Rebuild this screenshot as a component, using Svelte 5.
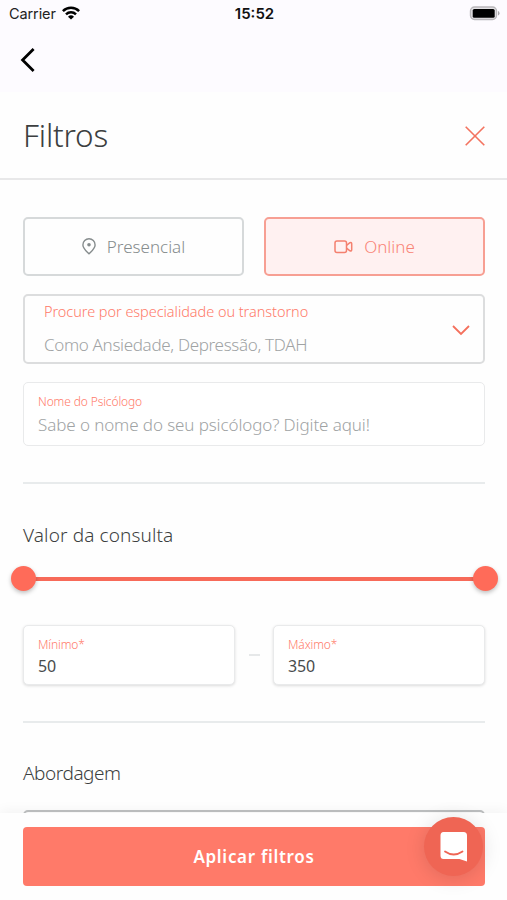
<script lang="ts">
	// Tipos de atendimento
	type Mode = 'presencial' | 'online';

	let mode: Mode = $state('online');
	let specialty = $state('');
	let name = $state('');

	// Limites do valor da consulta
	const limits = { min: 50, max: 350 };
	let min = $state(50);
	let max = $state(350);

	// Posição dos marcadores em porcentagem
	let start = $derived(((min - limits.min) / (limits.max - limits.min)) * 100);
	let end = $derived(((max - limits.min) / (limits.max - limits.min)) * 100);
</script>

<div class="screen">
	<header class="top">
		<div class="status">
			<div class="carrier">
				<span>Carrier</span>
				<svg width="18" height="14" viewBox="0 0 18 14" fill="none" stroke="#000" stroke-width="2.5">
					<path d="M.9 5.1a11.5 11.5 0 0 1 16.2 0" />
					<path d="M4 8.3a7.2 7.2 0 0 1 10 0" />
					<path d="M9 13.5 6 10.7a4.4 4.4 0 0 1 6 0z" fill="#000" stroke="none" />
				</svg>
			</div>
			<span class="time">15:52</span>
			<svg class="battery" width="31" height="15" viewBox="0 0 31 15">
				<rect x="1.5" y="1" width="26" height="12.5" rx="4" fill="#e4e2e5" stroke="#b9b7ba" stroke-width="1.4" />
				<rect x="3.7" y="3" width="22" height="8.8" rx="1.6" fill="#000" />
				<path d="M29 5v4.5q1.5-.6 1.5-2.25T29 5z" fill="#a9a7aa" />
			</svg>
		</div>
		<button class="back" aria-label="Voltar">
			<svg width="16" height="26" viewBox="0 0 16 26" fill="none" stroke="#000" stroke-width="2.8">
				<path d="M13.6 2 2.6 13l11 11" />
			</svg>
		</button>
	</header>

	<div class="title">
		<h1>Filtros</h1>
		<button aria-label="Fechar">
			<svg width="20" height="20" viewBox="0 0 20 20" fill="none" stroke="#f3735f" stroke-width="1.6">
				<path d="M.7.7l18.6 18.6M19.3.7.7 19.3" />
			</svg>
		</button>
	</div>

	<main>
		<div class="modes">
			<button class="mode" class:active={mode === 'presencial'} onclick={() => (mode = 'presencial')}>
				<svg width="14" height="17" viewBox="0 0 14 17" fill="none" stroke="currentColor" stroke-width="1.4">
					<path d="M7 15.8C4.5 13.2.9 10.4.9 6.9a6.1 6.1 0 0 1 12.2 0c0 3.5-3.6 6.3-6.1 8.9z" />
					<circle cx="7" cy="6.8" r="1.8" fill="currentColor" stroke="none" />
				</svg>
				<span>Presencial</span>
			</button>
			<button class="mode" class:active={mode === 'online'} onclick={() => (mode = 'online')}>
				<svg width="19" height="14" viewBox="0 0 19 14" fill="none" stroke="#f4806f" stroke-width="1.5">
					<rect x="1" y="1" width="11.5" height="11.5" rx="2" />
					<path d="M12.5 5.3 16 2.7q1.7-.6 1.7 1v6.1q0 1.6-1.7 1l-3.5-2.6" stroke-linejoin="round" />
				</svg>
				<span>Online</span>
			</button>
		</div>

		<div class="select">
			<div class="select-text">
				<span class="label">Procure por especialidade ou transtorno</span>
				<span class="value">{specialty || 'Como Ansiedade, Depressão, TDAH'}</span>
			</div>
			<svg width="18" height="11" viewBox="0 0 18 11" fill="none" stroke="#f4705d" stroke-width="1.8">
				<path d="M1 1l8 8 8-8" />
			</svg>
		</div>

		<label class="field name">
			<span>Nome do Psicólogo</span>
			<input bind:value={name} placeholder="Sabe o nome do seu psicólogo? Digite aqui!" />
		</label>

		<hr />

		<h2 class="price-title">Valor da consulta</h2>
		<div class="slider">
			<div class="range" style="left: {start}%; width: {end - start}%"></div>
			<i class="thumb" style="left: {start}%"></i>
			<i class="thumb" style="left: {end}%"></i>
		</div>

		<div class="prices">
			<label class="field price">
				<span>Mínimo*</span>
				<input bind:value={min} />
			</label>
			<span class="dash"></span>
			<label class="field price">
				<span>Máximo*</span>
				<input bind:value={max} />
			</label>
		</div>

		<hr />

		<h2 class="approach-title">Abordagem</h2>
		<div class="select approach"></div>
	</main>

	<footer>
		<button class="apply">Aplicar filtros</button>
		<button class="chat" aria-label="Abrir chat">
			<svg width="28" height="30" viewBox="0 0 28 30">
				<path d="M3.5 0h20Q27 0 27 3.5V29.5L19.5 27h-16Q.5 27 .5 23.5v-20Q.5 0 3.5 0z" fill="#fff" />
				<path d="M5 19.5q8.7 6 17.5 0" fill="none" stroke="#ef6554" stroke-width="1.8" stroke-linecap="round" />
			</svg>
		</button>
	</footer>
</div>

<style>
	:global(body) {
		margin: 0;
		background: #fff;
	}

	.screen {
		position: relative;
		display: flex;
		flex-direction: column;
		height: 900px;
		overflow: hidden;
		background: #fefefe;
		font-family: 'Noto Sans', sans-serif;
		font-weight: 300;
		color: #3c3f40;
	}

	.screen * {
		box-sizing: border-box;
	}

	button {
		padding: 0;
		border: none;
		background: none;
		font: inherit;
		color: inherit;
		cursor: pointer;
	}

	svg {
		display: block;
		flex-shrink: 0;
	}

	h1,
	h2 {
		margin: 0;
		font-weight: 300;
		white-space: nowrap;
	}

	.top {
		height: 92px;
		flex-shrink: 0;
		background: #fdfbff;
	}

	.status {
		display: grid;
		grid-template-columns: 1fr auto 1fr;
		align-items: center;
		height: 28px;
		padding: 0 7px 0 9px;
		font: 400 14.5px/28px Inter, sans-serif;
		color: #222;
	}

	.carrier {
		display: flex;
		align-items: center;
		gap: 6px;
	}

	.carrier span {
		letter-spacing: -0.1px;
	}

	.carrier svg {
		margin-top: -3px;
	}

	.time {
		font-weight: 600;
		font-size: 15px;
		color: #111;
	}

	.battery {
		justify-self: end;
		margin-top: -2px;
	}

	.back {
		display: block;
		margin: 19px 0 0 20px;
	}

	.title {
		display: flex;
		flex-shrink: 0;
		align-items: center;
		justify-content: space-between;
		height: 88px;
		padding: 0 22px 0 23px;
		border-bottom: 2px solid #e8e8e9;
	}

	.title button {
		margin-top: 2px;
	}

	h1 {
		font-size: 31.5px;
		line-height: 40px;
		letter-spacing: -0.2px;
		color: #3c3f40;
	}

	main {
		display: flex;
		flex-direction: column;
		flex-shrink: 0;
		padding: 37px 22px 0 23px;
	}

	.modes {
		display: flex;
		gap: 20px;
	}

	.mode {
		display: flex;
		flex: 1;
		align-items: center;
		justify-content: center;
		gap: 11px;
		height: 59px;
		border: 2px solid #d6d9da;
		border-radius: 5px;
		font-size: 17px;
		color: #868c8d;
	}

	.mode.active {
		border-color: #f79f93;
		background: #fff1f1;
		color: #f98476;
	}

	.select {
		display: flex;
		align-items: center;
		justify-content: space-between;
		height: 70px;
		margin-top: 18px;
		padding: 0 13px 0 19px;
		border: 2px solid #dcddde;
		border-radius: 5px;
	}

	.select-text {
		display: flex;
		flex-direction: column;
		gap: 11px;
		margin-top: -1px;
		white-space: nowrap;
	}

	.label {
		font-size: 14.5px;
		line-height: 22px;
		letter-spacing: -0.05px;
		color: #ff7a69;
	}

	.value {
		font-size: 17px;
		line-height: 24px;
		letter-spacing: -0.33px;
		color: #a0a3a4;
	}

	.select svg {
		margin-top: 2px;
	}

	.field {
		display: flex;
		flex-direction: column;
		min-width: 0;
		padding: 10px 14px 0;
		border: 1px solid #e9eaeb;
		border-radius: 5px;
		background: #fff;
	}

	.field span {
		font-size: 12px;
		line-height: 18px;
		letter-spacing: -0.12px;
		color: #ff7a69;
	}

	.field input {
		width: 100%;
		height: 26px;
		padding: 0;
		border: none;
		outline: none;
		background: none;
		font: inherit;
		font-size: 17px;
		letter-spacing: -0.1px;
		color: #484b4c;
	}

	.field input::placeholder {
		color: #a0a3a4;
		opacity: 1;
	}

	.name {
		height: 64px;
		margin-top: 18px;
	}

	hr {
		width: 100%;
		height: 2px;
		margin: 36px 0 0;
		border: none;
		background: #e8ebec;
	}

	h2 {
		font-size: 19px;
		line-height: 28px;
	}

	.price-title {
		margin-top: 37px;
		letter-spacing: 0.12px;
	}

	.slider {
		position: relative;
		height: 26px;
		margin-top: 17px;
	}

	.range {
		position: absolute;
		top: 11px;
		height: 4px;
		background: #f76a59;
	}

	.thumb {
		position: absolute;
		top: 0;
		width: 25px;
		height: 25px;
		margin-left: -12.5px;
		border-radius: 50%;
		background: #ff6b59;
		box-shadow: 0 2px 4px rgba(0, 0, 0, 0.25);
	}

	.prices {
		display: flex;
		align-items: center;
		justify-content: space-between;
		margin-top: 33px;
	}

	.price {
		width: 212px;
		height: 60px;
		box-shadow: 0 1px 3px rgba(0, 0, 0, 0.14);
	}

	.price input {
		height: 24px;
		font-weight: 400;
		font-size: 16px;
	}

	.dash {
		width: 11px;
		height: 2px;
		background: #e6e8e9;
	}

	.approach-title {
		margin-top: 36px;
		letter-spacing: -0.45px;
	}

	.approach {
		margin-top: 23px;
		border-color: #bfc1c2;
	}

	footer {
		position: absolute;
		right: 0;
		bottom: 0;
		left: 0;
		height: 87px;
		padding: 14px 22px 0 23px;
		background: #fefefe;
		box-shadow: 0 -2px 12px rgba(0, 0, 0, 0.05);
	}

	.apply {
		width: 100%;
		height: 59px;
		border-radius: 4px;
		background: #ff7a69;
		font-weight: 600;
		font-size: 17px;
		letter-spacing: 0.7px;
		color: #fff;
	}

	.chat {
		position: absolute;
		top: 4px;
		left: 424px;
		display: flex;
		align-items: center;
		justify-content: center;
		width: 59px;
		height: 59px;
		border-radius: 50%;
		background: #ef6554;
		box-shadow: 0 2px 20px rgba(0, 0, 0, 0.13);
	}
</style>
